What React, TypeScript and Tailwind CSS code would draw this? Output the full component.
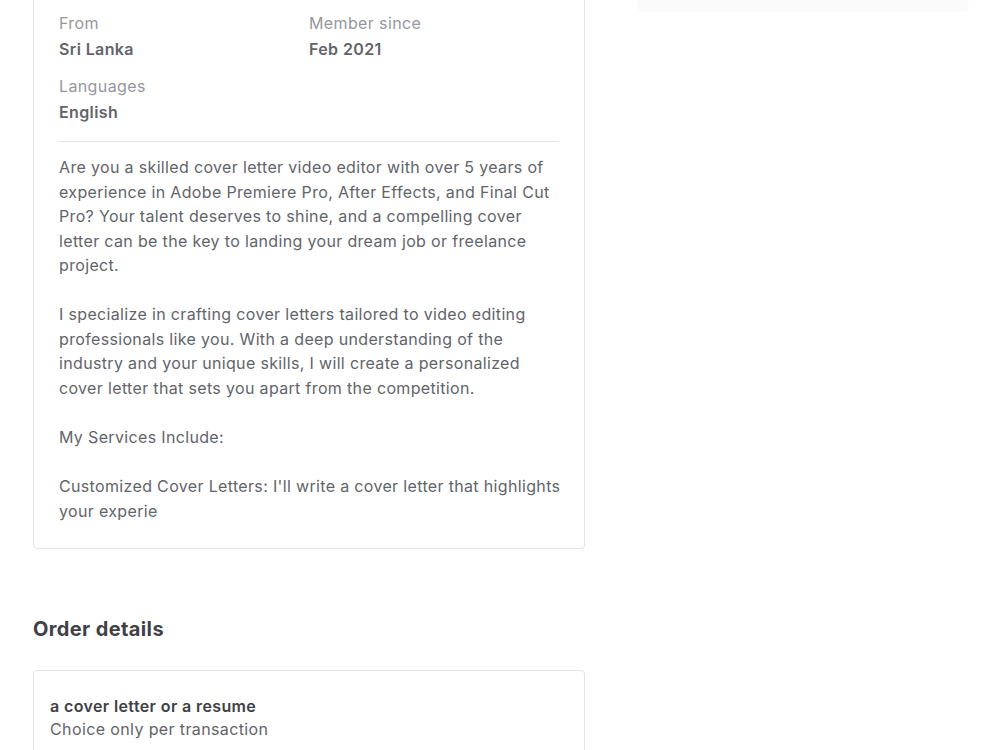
const description = `Are you a skilled cover letter video editor with over 5 years of experience in Adobe Premiere Pro, After Effects, and Final Cut Pro? Your talent deserves to shine, and a compelling cover letter can be the key to landing your dream job or freelance project.

I specialize in crafting cover letters tailored to video editing professionals like you. With a deep understanding of the industry and your unique skills, I will create a personalized cover letter that sets you apart from the competition.

My Services Include:

Customized Cover Letters: I'll write a cover letter that highlights your experie`;

function InfoItem({ label, value }: { label: string; value: string }) {
  return (
    <div>
      <p className="text-[16px] leading-[26px] text-[#95979d]">{label}</p>
      <p className="text-[16px] leading-[26px] font-semibold text-[#62646a]">{value}</p>
    </div>
  );
}

export default function App() {
  return (
    <div
      className="min-h-[750px] bg-white overflow-hidden tracking-[0.38px]"
      style={{ fontFamily: 'Inter, "Liberation Sans", sans-serif' }}
    >
      <div className="flex gap-[53px] pl-[33px] -mt-[19px]">
        {/* left column */}
        <div className="w-[552px] shrink-0">
          <div className="border border-[#e4e5e7] rounded-[4px] px-[25px] pt-[28px] pb-[25px]">
            <div className="grid grid-cols-2 gap-y-[11px]">
              <InfoItem label="From" value="Sri Lanka" />
              <InfoItem label="Member since" value="Feb 2021" />
              <InfoItem label="Languages" value="English" />
            </div>
            <hr className="mt-[16px] mb-[13px] border-0 border-t border-[#e4e5e7]" />
            <p className="-mr-[3px] text-[16px] leading-[24.55px] tracking-[0.34px] text-[#62646a] whitespace-pre-line">
              {description}
            </p>
          </div>

          <h2 className="mt-[66px] text-[20px] leading-[28px] font-bold text-[#404145]">
            Order details
          </h2>

          <div className="mt-[27px] border border-[#e4e5e7] rounded-[4px] px-[16px] pt-[24px] pb-[24px]">
            <p className="text-[16px] leading-[23px] font-semibold text-[#404145]">
              a cover letter or a resume
            </p>
            <p className="text-[16px] leading-[23px] text-[#62646a]">
              Choice only per transaction
            </p>
          </div>
        </div>

        {/* right column */}
        <div className="w-[330px] shrink-0">
          <div className="h-[29px] bg-[#fafafa] rounded-b-[4px] shadow-[0_1px_2px_rgba(0,0,0,0.04)]" />
        </div>
      </div>
    </div>
  );
}
